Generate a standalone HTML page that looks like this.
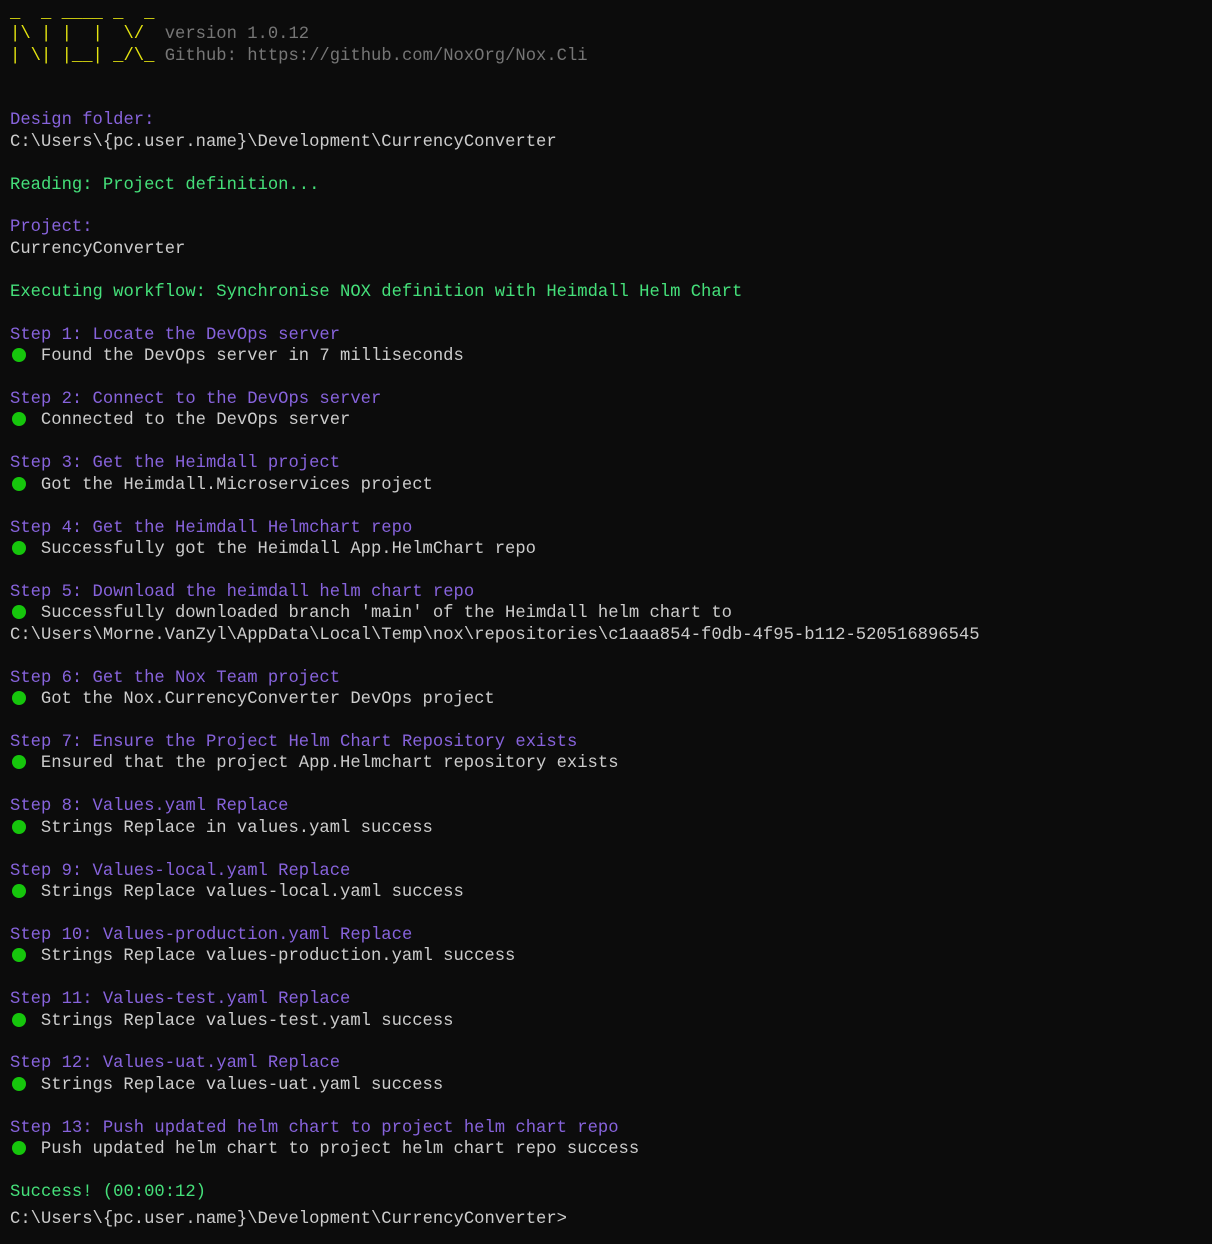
<!DOCTYPE html><html><head><style>
body{margin:0;background:#0c0c0c;width:1212px;height:1244px;overflow:hidden}
pre{margin:0;padding:3px 0 0 10px;font-family:"Liberation Mono",monospace;font-size:17.2px;line-height:21.44px;color:#cccccc;position:relative;top:0}
.y{color:#e5e510}.g{color:#767676}.p{color:#8763dc}.t{color:#45e07a}
.d{display:inline-block;width:14px;height:14px;border-radius:50%;background:#16c60c;vertical-align:-2px;margin-left:2px;margin-right:4.6px}
.l{display:block;margin-top:5px}
</style></head><body><pre><span class="y">_  _ ____ _  _</span>
<span class="y">|\ | |  |  \/  </span><span class="g">version 1.0.12</span>
<span class="y">| \| |__| _/\_ </span><span class="g">Github: https://github.com/NoxOrg/Nox.Cli</span>


<span class="p">Design folder:</span>
C:\Users\{pc.user.name}\Development\CurrencyConverter

<span class="t">Reading: Project definition...</span>

<span class="p">Project:</span>
CurrencyConverter

<span class="t">Executing workflow: Synchronise NOX definition with Heimdall Helm Chart</span>

<span class="p">Step 1: Locate the DevOps server</span>
<span class="d"></span> Found the DevOps server in 7 milliseconds

<span class="p">Step 2: Connect to the DevOps server</span>
<span class="d"></span> Connected to the DevOps server

<span class="p">Step 3: Get the Heimdall project</span>
<span class="d"></span> Got the Heimdall.Microservices project

<span class="p">Step 4: Get the Heimdall Helmchart repo</span>
<span class="d"></span> Successfully got the Heimdall App.HelmChart repo

<span class="p">Step 5: Download the heimdall helm chart repo</span>
<span class="d"></span> Successfully downloaded branch 'main' of the Heimdall helm chart to
C:\Users\Morne.VanZyl\AppData\Local\Temp\nox\repositories\c1aaa854-f0db-4f95-b112-520516896545

<span class="p">Step 6: Get the Nox Team project</span>
<span class="d"></span> Got the Nox.CurrencyConverter DevOps project

<span class="p">Step 7: Ensure the Project Helm Chart Repository exists</span>
<span class="d"></span> Ensured that the project App.Helmchart repository exists

<span class="p">Step 8: Values.yaml Replace</span>
<span class="d"></span> Strings Replace in values.yaml success

<span class="p">Step 9: Values-local.yaml Replace</span>
<span class="d"></span> Strings Replace values-local.yaml success

<span class="p">Step 10: Values-production.yaml Replace</span>
<span class="d"></span> Strings Replace values-production.yaml success

<span class="p">Step 11: Values-test.yaml Replace</span>
<span class="d"></span> Strings Replace values-test.yaml success

<span class="p">Step 12: Values-uat.yaml Replace</span>
<span class="d"></span> Strings Replace values-uat.yaml success

<span class="p">Step 13: Push updated helm chart to project helm chart repo</span>
<span class="d"></span> Push updated helm chart to project helm chart repo success

<span class="t">Success! (00:00:12)</span>
<span class="l">C:\Users\{pc.user.name}\Development\CurrencyConverter&gt;</span></pre></body></html>
